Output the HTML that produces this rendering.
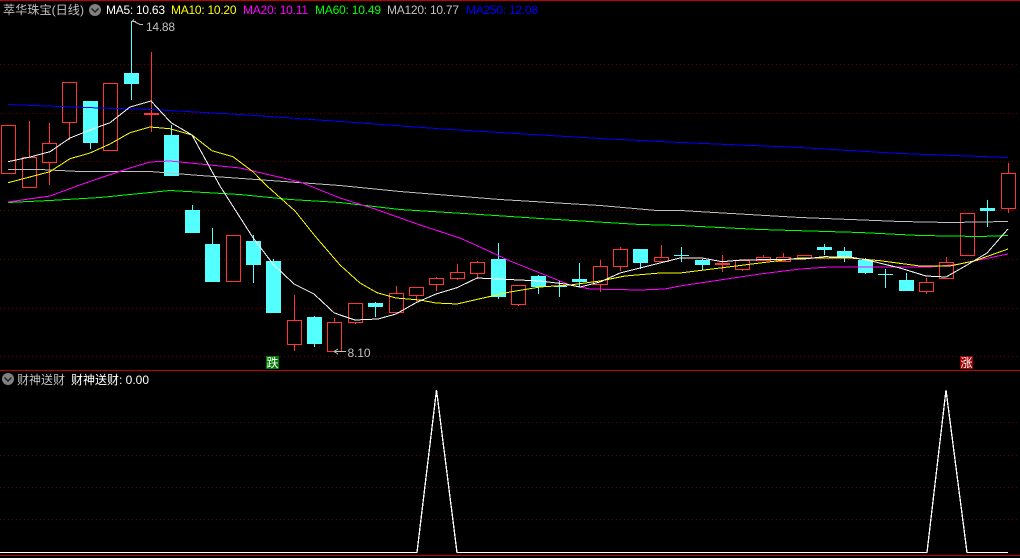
<!DOCTYPE html>
<html><head><meta charset="utf-8"><style>
html,body{margin:0;padding:0;background:#000;width:1020px;height:558px;overflow:hidden}
svg{display:block}
text{font-family:"Liberation Sans","WenQuanYi Zen Hei","Noto Sans CJK SC",sans-serif;font-size:12px}
</style></head><body>
<svg width="1020" height="558" viewBox="0 0 1020 558" xmlns="http://www.w3.org/2000/svg">
<rect width="1020" height="558" fill="#000"/>
<g stroke="#6e0000" stroke-dasharray="1 3" fill="none" shape-rendering="crispEdges">
<path d="M0 64.5H1020M0 113.5H1020M0 161.5H1020M0 210.5H1020M0 259.5H1020M0 308.5H1020M0 356.5H1020M0 422.5H1020M0 455.5H1020M0 487.5H1020M0 519.5H1020"/>
</g>
<rect x="0" y="0" width="1020" height="1" fill="#c00000"/>
<rect x="0" y="370" width="1020" height="1" fill="#c00000"/>
<rect x="0" y="555" width="1020" height="1" fill="#c00000"/>

<g fill="#54ffff" shape-rendering="crispEdges">
<rect x="83" y="101" width="15" height="42"/><rect x="90" y="143" width="1" height="6"/>
<rect x="124" y="73" width="15" height="11"/><rect x="131" y="21" width="1" height="79"/>
<rect x="164" y="135" width="15" height="41"/><rect x="171" y="125" width="1" height="10"/>
<rect x="185" y="210" width="15" height="23"/><rect x="192" y="205" width="1" height="5"/>
<rect x="205" y="244" width="15" height="38"/><rect x="212" y="228" width="1" height="16"/>
<rect x="246" y="241" width="15" height="24"/><rect x="253" y="235" width="1" height="48"/>
<rect x="266" y="261" width="15" height="52"/><rect x="273" y="259" width="1" height="2"/>
<rect x="307" y="317" width="15" height="27"/><rect x="314" y="316" width="1" height="31"/>
<rect x="368" y="303" width="15" height="4"/><rect x="375" y="302" width="1" height="15"/>
<rect x="491" y="259" width="15" height="38"/><rect x="498" y="243" width="1" height="56"/>
<rect x="531" y="276" width="15" height="11"/><rect x="538" y="275" width="1" height="19"/>
<rect x="554" y="286" width="13" height="1"/><rect x="559" y="281" width="1" height="16"/>
<rect x="572" y="279" width="15" height="3"/><rect x="579" y="263" width="1" height="24"/>
<rect x="633" y="249" width="15" height="14"/><rect x="640" y="263" width="1" height="6"/>
<rect x="674" y="255" width="15" height="1"/><rect x="681" y="247" width="1" height="15"/>
<rect x="695" y="260" width="15" height="5"/><rect x="702" y="259" width="1" height="11"/>
<rect x="817" y="247" width="15" height="3"/><rect x="824" y="244" width="1" height="11"/>
<rect x="837" y="251" width="15" height="7"/><rect x="844" y="247" width="1" height="15"/>
<rect x="858" y="260" width="15" height="13"/><rect x="865" y="258" width="1" height="16"/>
<rect x="878" y="274" width="15" height="1"/><rect x="885" y="269" width="1" height="19"/>
<rect x="899" y="280" width="15" height="11"/><rect x="906" y="273" width="1" height="7"/>
<rect x="980" y="208" width="15" height="3"/><rect x="987" y="200" width="1" height="27"/>
</g>
<path fill="none" stroke="#ff3434" stroke-width="1" shape-rendering="crispEdges" d="
M1.5 125.5H15.5V173.5H1.5Z
M22.5 157.5H36.5V187.5H22.5ZM29.5 121V157
M42.5 143.5H56.5V162.5H42.5ZM49.5 123V143M49.5 163V185
M62.5 82.5H76.5V122.5H62.5ZM69.5 123V140
M103.5 83.5H117.5V150.5H103.5Z
M151.5 52V132
M226.5 235.5H240.5V281.5H226.5Z
M287.5 320.5H301.5V344.5H287.5ZM294.5 295V320M294.5 345V351
M327.5 322.5H341.5V351.5H327.5ZM334.5 318V322
M348.5 303.5H362.5V322.5H348.5ZM355.5 323V324
M389.5 293.5H403.5V312.5H389.5ZM396.5 286V293
M409.5 287.5H423.5V295.5H409.5ZM416.5 296V302
M429.5 278.5H443.5V284.5H429.5ZM436.5 277V278M436.5 285V291
M450.5 272.5H464.5V278.5H450.5ZM457.5 264V272M457.5 279V280
M470.5 262.5H484.5V273.5H470.5ZM477.5 261V262M477.5 274V279
M511.5 285.5H525.5V304.5H511.5ZM518.5 305V306
M593.5 266.5H607.5V284.5H593.5ZM600.5 260V266M600.5 285V292
M613.5 249.5H627.5V266.5H613.5ZM620.5 247V249M620.5 267V271
M654.5 257.5H668.5V261.5H654.5ZM661.5 245V257
M722.5 255V272
M735.5 260.5H749.5V269.5H735.5ZM742.5 270V271
M756.5 257.5H770.5V260.5H756.5ZM763.5 255V257
M776.5 257.5H790.5V261.5H776.5ZM783.5 253V257
M797.5 255.5H811.5V258.5H797.5Z
M919.5 282.5H933.5V291.5H919.5ZM926.5 278V282M926.5 292V294
M939.5 262.5H953.5V278.5H939.5ZM946.5 257V262
M960.5 213.5H974.5V255.5H960.5Z
M1001.5 173.5H1015.5V208.5H1001.5ZM1008.5 163V173M1008.5 209V213"/>
<rect x="144" y="113" width="15" height="2" fill="#ff3434" shape-rendering="crispEdges"/>
<rect x="715" y="263" width="15" height="2" fill="#ff3434" shape-rendering="crispEdges"/>

<g fill="none" stroke-width="1" shape-rendering="crispEdges">
<polyline stroke="#0000ff" points="8,104.5 100,108 151,109.5 240,114.5 340,121.5 450,129.5 600,138.5 680,142.5 800,147.5 900,153.5 1008,157.5"/>
<polyline stroke="#c0c0c0" points="8,169.5 40,169.5 80,171.5 150,171.5 200,175.5 270,180.5 340,185.5 400,191.5 500,199.5 600,205.5 657,210.5 680,210.5 800,217.5 850,219.5 900,221.5 950,222.5 1008,221.5"/>
<polyline stroke="#00ff00" points="8,202.5 50,200.5 100,197.5 170,190.5 240,194.5 290,199.5 340,202.5 400,209.5 480,214.5 540,218.5 640,224.5 680,225.5 760,229.5 860,232.5 920,235.5 980,236.5 1008,235.5"/>
<polyline stroke="#ff00ff" points="8,202 50,196 77,186 100,178 130,168 150,162 170,161 200,164 240,168 270,175 300,182 340,198 375,209 420,225 460,238 480,247 510,261 540,273 570,285 590,289 640,290 665,289 680,286 720,280 760,274 800,269 830,267 880,267 930,267 960,264 1008,254"/>
<polyline stroke="#ffff00" points="8,182.7 50,171.7 70,158.7 90,153 110,144 130,132.7 150,127 170,128.7 192,135 212,150.7 233,156.7 253,171.7 267,186 295,211 315,236 340,265 360,283 377,292.7 396,298 420,300 436,303 457,304 480,298.7 510,292 540,287 570,285 600,281 625,276 660,273 680,273 720,268 760,263 800,258 850,258 880,260.7 920,266 950,266 975,260.7 1008,249"/>
<polyline stroke="#ffffff" points="8,161.7 30,157 50,151.7 70,138 90,130 110,122.7 130,107 151,101 171,122.7 192,135 220,186 253,237.7 273,264 294,284 314,294 334,312.7 340,315 355,320 378,319 396,314 416,302.7 436,294 457,287.7 477,278 498,279 540,281 565,284 580,287 600,282 620,273 660,263 680,258 702,258 722,261.7 742,260 804,259 824,256.7 850,257 870,260.7 900,268 926,276 946,277 967,265 987,253 1008,229"/>
<polyline stroke="#ffffff" stroke-width="1.3" points="0,552.5 417,552.5 436.5,390 457,552.5 927,552.5 946,390 967,552.5 1008,552.5"/>
</g>

<path d="M132 21.5H136M132 21.5L134 19.5M135 22L140 24.5H143" fill="none" stroke="#c0c0c0"/>
<path d="M334 351.5H346M334 351.5L338 349M334 351.5L338 354" fill="none" stroke="#c0c0c0"/>
<text x="146" y="31" fill="#c0c0c0" textLength="29" lengthAdjust="spacing">14.88</text>
<text x="347.5" y="357" fill="#c0c0c0" textLength="23" lengthAdjust="spacing">8.10</text>

<text x="3" y="14" fill="#c0c0c0" textLength="81" lengthAdjust="spacingAndGlyphs">萃华珠宝(日线)</text>
<circle cx="95" cy="10" r="6" fill="#808080"/>
<path d="M91.5 8.5L95 12L98.5 8.5" fill="none" stroke="#222" stroke-width="1.5"/>
<text x="106" y="14" fill="#ffffff" textLength="59" lengthAdjust="spacing">MA5: 10.63</text>
<text x="171" y="14" fill="#ffff00" textLength="65.5" lengthAdjust="spacing">MA10: 10.20</text>
<text x="243" y="14" fill="#ff00ff" textLength="65" lengthAdjust="spacing">MA20: 10.11</text>
<text x="315" y="14" fill="#00ff00" textLength="66" lengthAdjust="spacing">MA60: 10.49</text>
<text x="387" y="14" fill="#c0c0c0" textLength="72" lengthAdjust="spacing">MA120: 10.77</text>
<text x="466" y="14" fill="#0000ff" textLength="72" lengthAdjust="spacing">MA250: 12.08</text>

<circle cx="8" cy="379" r="6" fill="#808080"/>
<path d="M4.5 377.5L8 381L11.5 377.5" fill="none" stroke="#222" stroke-width="1.5"/>
<text x="17" y="384" fill="#c0c0c0" textLength="48" lengthAdjust="spacingAndGlyphs">财神送财</text>
<text x="71" y="384" fill="#ffffff" textLength="78" lengthAdjust="spacing">财神送财: 0.00</text>

<rect x="266" y="356" width="13" height="13" fill="#007a00"/>
<text x="266.5" y="367" fill="#ffffff" style="font-size:12px">跌</text>
<rect x="960" y="356" width="13" height="13" fill="#a00000"/>
<text x="960.5" y="367" fill="#ffffff" style="font-size:12px">涨</text>
</svg>
</body></html>
